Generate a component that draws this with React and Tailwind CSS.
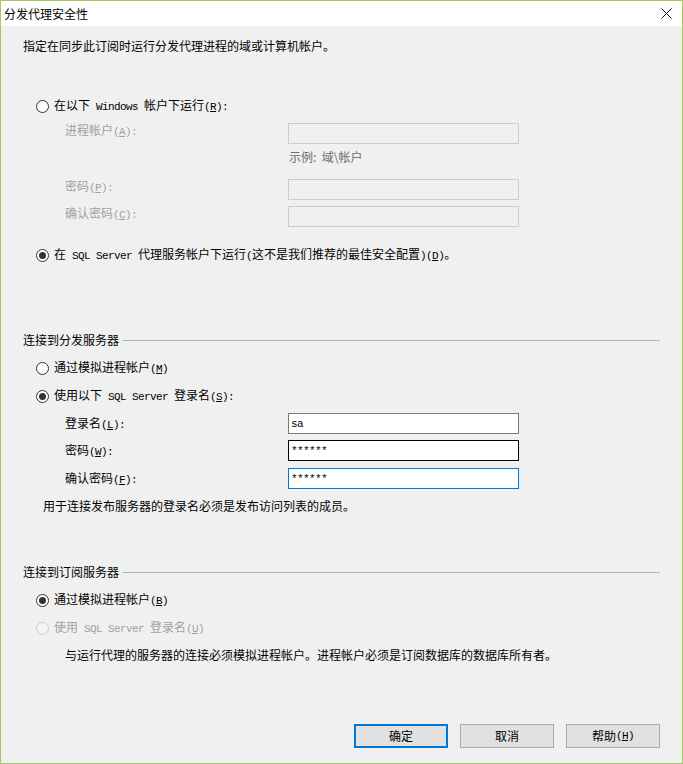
import React from "react";

const cjk = "font-['Microsoft_YaHei_UI','Noto_Sans_CJK_SC',sans-serif]";

const M = ({ children }) => (
  <span className="font-['Liberation_Mono',monospace] text-[11px] tracking-[-0.6px] whitespace-pre">{children}</span>
);

const Key = ({ k, colon }) => (
  <M>
    (<u>{k}</u>){colon ? ":" : ""}
  </M>
);

const Radio = ({ checked, disabled }) => (
  <span
    className={`w-[13px] h-[13px] rounded-full border flex items-center justify-center shrink-0 ${
      disabled ? "border-[#cccccc] bg-[#f4f4f4]" : "border-[#333333] bg-white"
    }`}
  >
    {checked && <span className="w-[7px] h-[7px] rounded-full bg-[#333333]" />}
  </span>
);

const RadioRow = ({ checked, disabled, children, className = "" }) => (
  <div className={`h-[20px] flex items-center gap-[5px] pl-[13px] ${className}`}>
    <Radio checked={checked} disabled={disabled} />
    <span className={`whitespace-nowrap ${disabled ? "text-[#a0a0a0]" : "text-black"}`}>{children}</span>
  </div>
);

const Field = ({ label, disabled, value, border = "border-[#7a7a7a]", className = "" }) => (
  <div className={`h-[21px] flex pl-[42px] ${disabled ? "items-start" : "items-center"} ${className}`}>
    <div className={`w-[223px] ${disabled ? "text-[#a0a0a0] leading-[14px]" : "text-black leading-[20px]"}`}>{label}</div>
    <div
      className={`w-[231px] h-[21px] border flex items-center px-[2px] ${
        disabled ? "border-[#cccccc] bg-[#f0f0f0]" : `${border} bg-white`
      }`}
    >
      {value && <span className="font-['Liberation_Mono',monospace] text-[11px] leading-[14px] tracking-[-0.6px]">{value}</span>}
    </div>
  </div>
);

const Section = ({ title, className = "" }) => (
  <div className={`h-[20px] flex items-center gap-[4px] pr-[22px] ${className}`}>
    <span>{title}</span>
    <div className="flex-1 h-px bg-[#b4b4b4]" />
  </div>
);

const Btn = ({ children, primary }) => (
  <button
    className={`w-[94px] h-[24px] bg-[#e1e1e1] text-[12px] text-black flex items-center justify-center ${
      primary ? "border-2 border-[#0078d7]" : "border border-[#adadad]"
    }`}
  >
    {children}
  </button>
);

export default function App() {
  return (
    <div className={`w-[683px] h-[764px] border border-[#a5c85c] flex flex-col bg-[#f0f0f0] text-[12px] text-black ${cjk}`}>
      {/* Title bar */}
      <div className="h-[25px] bg-white flex items-center justify-between pl-[3px] pr-[10px] shrink-0">
        <span className="leading-[20px]">分发代理安全性</span>
        <svg width="11" height="11" viewBox="0 0 11 11">
          <path d="M0.5 0.5 L10.5 10.5 M10.5 0.5 L0.5 10.5" stroke="#111" strokeWidth="1" />
        </svg>
      </div>

      <div className="flex-1 flex flex-col pl-[22px] leading-[20px]">
        <div className="h-[20px] mt-[10px]">指定在同步此订阅时运行分发代理进程的域或计算机帐户。</div>

        <RadioRow className="mt-[40px]">
          在以下<M> Windows </M>帐户下运行<Key k="R" colon />
        </RadioRow>
        <Field className="mt-[7px]" disabled label={<>进程帐户<Key k="A" colon /></>} />
        <div className="h-[16px] leading-[16px] mt-[5px] pl-[266px] text-[#6d6d6d]">示例:&nbsp;&nbsp;域\帐户</div>
        <Field className="mt-[14px]" disabled label={<>密码<Key k="P" colon /></>} />
        <Field className="mt-[6px]" disabled label={<>确认密码<Key k="C" colon /></>} />
        <RadioRow checked className="mt-[18px]">
          在<M> SQL Server </M>代理服务帐户下运行<M>(</M>这不是我们推荐的最佳安全配置<M>)</M><Key k="D" />。
        </RadioRow>

        <Section className="mt-[65px]" title="连接到分发服务器" />
        <RadioRow className="mt-[8px]">
          通过模拟进程帐户<Key k="M" />
        </RadioRow>
        <RadioRow checked className="mt-[8px]">
          使用以下<M> SQL Server </M>登录名<Key k="S" colon />
        </RadioRow>
        <Field className="mt-[7px]" label={<>登录名<Key k="L" colon /></>} value="sa" />
        <Field className="mt-[6px]" label={<>密码<Key k="W" colon /></>} value="******" border="border-black" />
        <Field className="mt-[7px]" label={<>确认密码<Key k="F" colon /></>} value="******" border="border-[#0078d7]" />
        <div className="h-[20px] mt-[7px] pl-[20px]">用于连接发布服务器的登录名必须是发布访问列表的成员。</div>

        <Section className="mt-[46px]" title="连接到订阅服务器" />
        <RadioRow checked className="mt-[8px]">
          通过模拟进程帐户<Key k="B" />
        </RadioRow>
        <RadioRow disabled className="mt-[8px]">
          使用<M> SQL Server </M>登录名<Key k="U" />
        </RadioRow>
        <div className="h-[20px] mt-[7px] pl-[42px]">
          与运行代理的服务器的连接必须模拟进程帐户。进程帐户必须是订阅数据库的数据库所有者。
        </div>

        <div className="mt-auto mb-[15px] flex justify-end gap-[12px] pr-[22px]">
          <Btn primary>确定</Btn>
          <Btn>取消</Btn>
          <Btn>
            帮助<Key k="H" />
          </Btn>
        </div>
      </div>
    </div>
  );
}
